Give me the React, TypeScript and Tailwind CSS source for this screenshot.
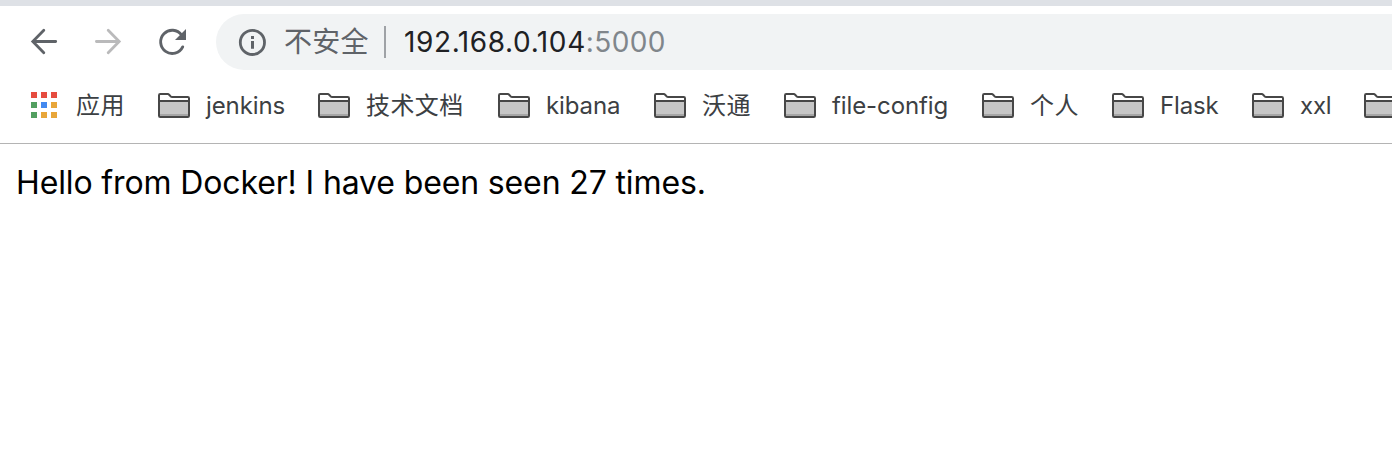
const bookmarks = [
  { name: "jenkins", box: "w-[160px]", text: "tracking-[-0.1px]" },
  { name: "技术文档", box: "w-[180px]", text: "tracking-[0.4px]" },
  { name: "kibana", box: "w-[156px]", text: "tracking-[-0.1px]" },
  { name: "沃通", box: "w-[130px]", text: "tracking-[0.4px]" },
  { name: "file-config", box: "w-[198px]", text: "tracking-[-0.1px]" },
  { name: "个人", box: "w-[130px]", text: "tracking-[0.4px]" },
  { name: "Flask", box: "w-[140px]", text: "tracking-[-0.15px]" },
  { name: "xxl", box: "w-[112px]", text: "tracking-[-0.2px]" },
  { name: "", box: "w-[112px]", text: "" },
];

const appDots = [
  "bg-[#e64c3f]", "bg-[#e64c3f]", "bg-[#e64c3f]",
  "bg-[#539f60]", "bg-[#4489ef]", "bg-[#e8a63a]",
  "bg-[#539f60]", "bg-[#e8a63a]", "bg-[#e8a63a]",
];

function Folder() {
  return (
    <svg className="h-[26px] w-8 shrink-0" viewBox="0 0 32 26" fill="none">
      <path d="M2 8.5h28v15H2z" fill="#c6c6c6" />
      <path d="M2 21h28v2.5H2z" fill="#a6a6a6" />
      <path d="M1 8h30" stroke="#474747" strokeWidth="2" />
      <path
        d="M1 2.2Q1 1 2.2 1H9.8Q10.6 1 11.2 1.8L12.6 3.3Q13.2 4 14.2 4H29.8Q31 4 31 5.2V22.8Q31 24 29.8 24H2.2Q1 24 1 22.8Z"
        stroke="#474747"
        strokeWidth="2"
      />
    </svg>
  );
}

export default function App() {
  return (
    <div className="flex h-[476px] w-full flex-col overflow-hidden bg-white font-['Inter','Noto_Sans_CJK_SC',sans-serif]">
      <div className="h-1.5 shrink-0 bg-[#dee1e6]" />
      <div className="flex h-[72px] shrink-0 items-center">
        <div className="flex w-[216px] shrink-0 items-center gap-8 pl-7">
          <svg className="h-8 w-8" viewBox="0 0 32 32" fill="none" stroke="#5f6368" strokeWidth="2.8">
            <path d="M27.7 15.5H5M15.8 4.3L4.8 15.5l11 11.2" strokeLinecap="round" />
          </svg>
          <svg className="h-8 w-8" viewBox="0 0 32 32" fill="none" stroke="#bababb" strokeWidth="2.8">
            <path d="M4.4 15.5H27M16.2 4.3L27.2 15.5 16.2 26.7" strokeLinecap="round" />
          </svg>
          <svg className="h-8 w-8" viewBox="0 0 32 32" fill="none">
            <path d="M25.6 9A11.6 11.6 0 1 0 26.7 20.9" stroke="#5f6368" strokeWidth="2.9" strokeLinecap="round" />
            <path d="M30 3v11H19z" fill="#5f6368" />
          </svg>
        </div>
        <div className="flex h-14 flex-1 items-center rounded-l-full bg-[#f1f3f4] pl-[22px] text-[28px] whitespace-nowrap">
          <svg className="h-7 w-7 shrink-0" viewBox="0 0 28 28" fill="none">
            <circle cx="14.4" cy="14.4" r="12.1" stroke="#5f6368" strokeWidth="2.8" />
            <path d="M14.5 8v3M14.5 13v7.8" stroke="#5f6368" strokeWidth="3" />
          </svg>
          <span className="ml-[18px] w-[100px] tracking-[0.2px] text-[#5f6368]">不安全</span>
          <span className="h-8 w-0.5 bg-[#9fa2a6]" />
          <span className="ml-[18px] tracking-[0.6px] text-[#202124]">
            192.168.0.104<span className="tracking-[0.4px] text-[#80868b]">:5000</span>
          </span>
        </div>
      </div>
      <div className="flex h-[66px] shrink-0 items-start overflow-hidden border-b border-[#b4b4b4] pt-[9px] text-2xl text-[#3c4043]">
        <div className="flex h-[38px] w-[158px] shrink-0 items-center pl-[31px]">
          <div className="-mt-0.5 grid grid-cols-3 gap-1">
            {appDots.map((color, i) => (
              <span key={i} className={`h-1.5 w-1.5 ${color}`} />
            ))}
          </div>
          <span className="ml-[19px] tracking-[0.4px]">应用</span>
        </div>
        {bookmarks.map((item, i) => (
          <div key={i} className={`flex h-[38px] shrink-0 items-center gap-4 whitespace-nowrap ${item.box}`}>
            <Folder />
            <span className={item.text}>{item.name}</span>
          </div>
        ))}
      </div>
      <main className="px-4 pt-[15px] text-[32px] leading-[48px] tracking-[-0.13px] text-black">
        <p className="whitespace-nowrap">Hello from Docker! I have been seen 27 times.</p>
      </main>
    </div>
  );
}
